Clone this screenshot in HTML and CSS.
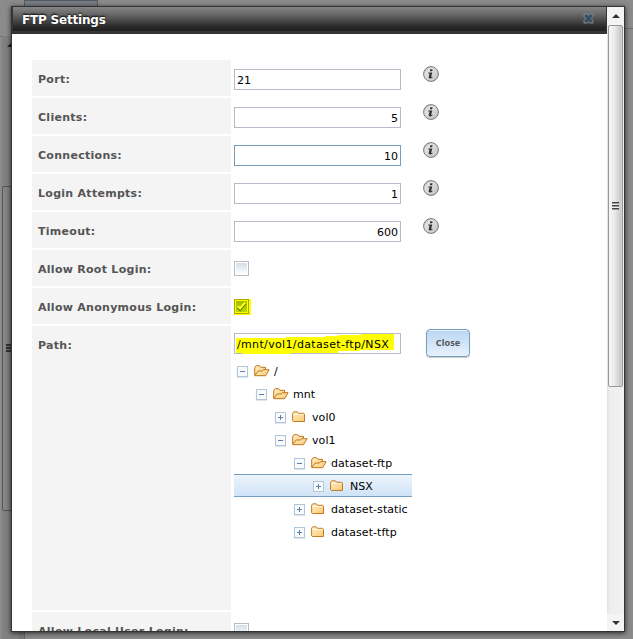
FILE: index.html
```html
<!DOCTYPE html>
<html lang="en">
<head>
<meta charset="utf-8">
<title>FTP Settings</title>
<link rel="stylesheet" href="styles.css">
</head>
<body>
<svg class="defs" width="0" height="0" aria-hidden="true">
  <defs>
    <linearGradient id="gold" x1="0" y1="0" x2="1" y2="1"><stop offset="0" stop-color="#fff0cc"/><stop offset="1" stop-color="#f9c96c"/></linearGradient>
    <linearGradient id="silver" x1="0" y1="0" x2="1" y2="1"><stop offset="0" stop-color="#a8a8a8"/><stop offset=".3" stop-color="#e2e2e2"/><stop offset=".6" stop-color="#d4d4d4"/><stop offset="1" stop-color="#bcbcbc"/></linearGradient>
    <symbol id="open" viewBox="0 0 16 12"><path d="M.7 10V2.5L2.2.7h3.3l1.3 1.6h4.7v2.5" fill="url(#gold)" stroke="#bf741f"/><path d="M.7 10.7L4.2 6h4l1.6-1.3h5.3l-3.6 6z" fill="url(#gold)" stroke="#bf741f"/></symbol>
    <symbol id="closed" viewBox="0 0 16 12"><path d="M.6 2.2L1.8.8h3.5l1.2 1.5h5.2l.8.8v7.4H1.4l-.8-.7z" fill="url(#gold)" stroke="#c27b29"/><path d="M1.5 3.5h10" stroke="#fff4d8" fill="none"/></symbol>
    <symbol id="info" viewBox="0 0 16 16"><circle cx="8" cy="8" r="7.4" fill="url(#silver)" stroke="#777"/><path d="M7.3 3.2h2.3l-.5 2H6.9zM5.4 6.4h3.9L8.1 11l1.5-.3-.4 1c-1.5 1.2-3.9 1-3.5-.6l.9-3.7H5.2z" fill="#333"/></symbol>
  </defs>
</svg>
<div class="under">
  <div class="under-top"></div><div class="under-tab"></div>
  <div class="under-track"><i class="under-arrow"></i><div class="under-thumb"><i class="under-grip"></i></div></div>
  <div class="under-line"></div>
</div>
<main class="dialog">
  <div class="content">
    <header class="title"><h1>FTP Settings</h1>
      <svg class="x" width="11" height="11" viewBox="0 0 11 11"><path d="M1 1h3.5l1 1.5 1-1.5H10v2.5L8.2 5.5 10 7.5V10H6.5l-1-1.5-1 1.5H1V7.5l1.8-2L1 3.5z" fill="#394f60" stroke="#858b90"/></svg>
    </header>
    <div class="form">
      <div class="row"><label>Port:</label><div class="field left">21</div><svg class="info"><use href="#info"/></svg></div>
      <div class="row"><label>Clients:</label><div class="field">5</div><svg class="info"><use href="#info"/></svg></div>
      <div class="row"><label>Connections:</label><div class="field focus">10</div><svg class="info"><use href="#info"/></svg></div>
      <div class="row"><label>Login Attempts:</label><div class="field">1</div><svg class="info"><use href="#info"/></svg></div>
      <div class="row"><label>Timeout:</label><div class="field">600</div><svg class="info"><use href="#info"/></svg></div>
      <div class="row"><label>Allow Root Login:</label><div class="check"></div></div>
      <div class="row"><label>Allow Anonymous Login:</label><div class="mark"><div class="check on"><svg width="11" height="11" viewBox="0 0 11 11"><path d="M1.7 6.2l2.4 2.4 5-6" fill="none" stroke="#4f7000" stroke-width="2.4"/><path d="M1.7 5.2l2.4 2.3 5-6" fill="none" stroke="#ffff20" stroke-width="2"/></svg></div></div></div>
      <div class="row path"><label>Path:</label>
        <div class="picker">
          <div class="field left path-field"><svg class="ink" width="160" height="20" viewBox="0 0 160 20"><path d="M0 4h50V3h40V2h13V1h22V0h33v16h-34v1h-22v2H55v1H7v-1H0z" fill="#ff0"/></svg><span>/mnt/vol1/dataset-ftp/NSX</span></div>
          <div class="tree">
            <div class="node"><i class="exp"></i><svg class="folder"><use href="#open"/></svg><span class="root">/</span></div>
            <div class="node l1"><i class="exp"></i><svg class="folder"><use href="#open"/></svg><span>mnt</span></div>
            <div class="node l2"><i class="exp plus"></i><svg class="folder"><use href="#closed"/></svg><span>vol0</span></div>
            <div class="node l2"><i class="exp"></i><svg class="folder"><use href="#open"/></svg><span>vol1</span></div>
            <div class="node l3"><i class="exp"></i><svg class="folder"><use href="#open"/></svg><span>dataset-ftp</span></div>
            <div class="node l4 selected"><i class="exp plus"></i><svg class="folder"><use href="#closed"/></svg><span>NSX</span></div>
            <div class="node l3"><i class="exp plus"></i><svg class="folder"><use href="#closed"/></svg><span>dataset-static</span></div>
            <div class="node l3"><i class="exp plus"></i><svg class="folder"><use href="#closed"/></svg><span>dataset-tftp</span></div>
          </div>
        </div>
        <button class="close">Close</button>
      </div>
      <div class="row"><label>Allow Local User Login:</label><div class="check"></div></div>
    </div>
  </div>
  <div class="scroll"><div class="arrow up"></div><div class="thumb"><i class="grip"></i></div><div class="arrow down"></div></div>
</main>
</body>
</html>
```
FILE: styles.css
```css
* { box-sizing: border-box; }
html, body { height: 100%; }
body { margin: 0; overflow: hidden; background: #8b8b8b; font: 11px/14px "DejaVu Sans", Verdana, sans-serif; color: #000; position: relative; }
.defs { position: absolute; }
.under { position: absolute; inset: 0; }
.under-top { position: absolute; left: 0; right: 0; top: 28px; height: 1px; background: #6e6e6e; }
.under-top::before { content: ""; position: absolute; left: 0; top: 0; width: 11px; height: 8px; background: #8b8b8b; border-bottom: 1px solid #6e6e6e; }
.under-tab { position: absolute; left: 24px; top: 0; width: 74px; height: 9px; background: #777d84; border: 1px solid #555b62; border-bottom: 0; }
.under-track { position: absolute; left: 2px; top: 36px; width: 17px; bottom: 0; background: #818181; }
.under-arrow { position: absolute; left: 5px; top: 7px; border: 4px solid transparent; border-top: 0; border-bottom-color: #222; }
.under-thumb { position: absolute; left: 0; top: 150px; width: 15px; height: 325px; border: 1px solid #555; border-radius: 2px; background: linear-gradient(90deg, #898989, #747474); }
.under-grip { position: absolute; left: 3px; top: 157px; width: 8px; height: 8px; background: repeating-linear-gradient(#333 0 2px, #777 2px 3px); }
.under-line { position: absolute; left: 19px; bottom: 0; width: 6px; height: 12px; background: #777; border-right: 1px solid #666; }

.dialog { position: absolute; left: 11px; top: 6px; width: 614px; height: 626px; border: 1px solid #333; background: #fff; display: flex; box-shadow: 0 1px 5px rgba(0,0,0,.75); overflow: hidden; }
.content { width: 595px; height: 624px; overflow: hidden; }
.title { height: 27px; padding: 0 12px 0 9px; display: flex; align-items: center; justify-content: space-between; background: linear-gradient(#858585, #686868 28%, #444 55%, #252525 80%, #222 93%, #363636 94%); border: 1px solid #333; border-top: 0; }
h1 { margin: 0; font-size: 12px; line-height: 14px; letter-spacing: -.2px; color: #fff; text-shadow: 0 -1px 2px #000; }
.x { margin-top: -3px; }
.form { padding: 26px 0 0 20px; display: grid; gap: 2px; }
.row { height: 36px; display: flex; align-items: flex-start; }
label { width: 199px; height: 100%; flex: none; margin-right: 3px; padding: 13px 6px 0; background: #f4f4f4; color: #555; font-weight: bold; letter-spacing: .28px; }
.field { width: 167px; height: 21px; margin-top: 9px; padding: 4px 2px 0; border: 1px solid #b5bcc7; background: #fff; text-align: right; line-height: 14px; position: relative; }
.field.left { text-align: left; }
.focus { border-color: #759dc0; }
.info { width: 16px; height: 16px; margin: 6px 0 0 22px; }
.check { width: 15px; height: 15px; margin-top: 11px; border: 1px solid #b5bcc7; background: linear-gradient(#d3deea, #fff) content-box #fff; padding: 1px; }
.mark { width: 17px; height: 16px; margin-top: 11px; background: #ff0; }
.on { margin: 0; border-color: #a9ac00; background: linear-gradient(#a4bd00, #bcd800) content-box #ff0; }
.on svg { display: block; }
.path { height: 284px; }
.picker { width: 178px; }
.ink { position: absolute; left: 1px; top: 0; }
.path-field.field { margin-top: 7px; }
.path-field span { position: relative; letter-spacing: .35px; }
.tree { margin-top: 5px; }
.node { height: 23px; display: flex; align-items: center; padding-left: 3px; white-space: nowrap; letter-spacing: .07px; }
.node span { padding-top: 2px; }
.l1 { padding-left: 22px; } .l2 { padding-left: 41px; } .l3 { padding-left: 60px; } .l4 { padding-left: 79px; }
.selected { border: solid #759dc0; border-width: 1px 0; background: linear-gradient(#edf4fb, #cfe3f8); }
.exp { flex: none; width: 11px; height: 11px; margin: 1px 6px 0 0; border: 1px solid #b3c5d8; background: linear-gradient(#5d81a5, #5d81a5) center / 5px 1px no-repeat, #f8fafc; box-shadow: 0 1px 1px #e2e7eb; }
.plus { background: linear-gradient(#5d81a5, #5d81a5) center / 5px 1px no-repeat, linear-gradient(#5d81a5, #5d81a5) center / 1px 5px no-repeat, #f8fafc; }
.folder { flex: none; width: 16px; height: 12px; margin: 1px 4px 0 0; }
.close { width: 44px; height: 28px; margin: 3px 0 0 14px; padding: 0 0 1px; border: 1px solid #759dc0; border-radius: 4px; background: linear-gradient(#fff, #bed7f2 5%, #cfe3f8 50%, #e8f1fb); box-shadow: 0 1px 1px rgba(0,0,0,.2); color: #555; font: bold 9px/12px "Noto Sans", "DejaVu Sans", sans-serif; letter-spacing: .1px; }
.scroll { width: 17px; height: 624px; background: linear-gradient(90deg, #e3e3e3, #eee 20%, #f1f1f1); display: flex; flex-direction: column; }
.arrow { height: 18px; background: #f4f4f4; display: flex; align-items: center; justify-content: center; }
.arrow::before { content: ""; border: 4px solid transparent; border-top: 0; border-bottom-color: #333; }
.down { margin-top: auto; height: 17px; }
.down::before { border-top: 4px solid #333; border-bottom: 0; }
.thumb { height: 362px; width: 15px; margin-left: 1px; border: 1px solid #979797; border-radius: 2px; background: linear-gradient(90deg, #f7f7f7, #e8e8e8 45%, #c8c8c8 90%, #ddd); display: flex; align-items: center; justify-content: center; }
.grip { width: 7px; height: 8px; background: linear-gradient(#444 0 1px, #999 1px 2px, #eee 2px 3px, #444 3px 4px, #999 4px 5px, #eee 5px 6px, #444 6px 7px, #999 7px); }
```
